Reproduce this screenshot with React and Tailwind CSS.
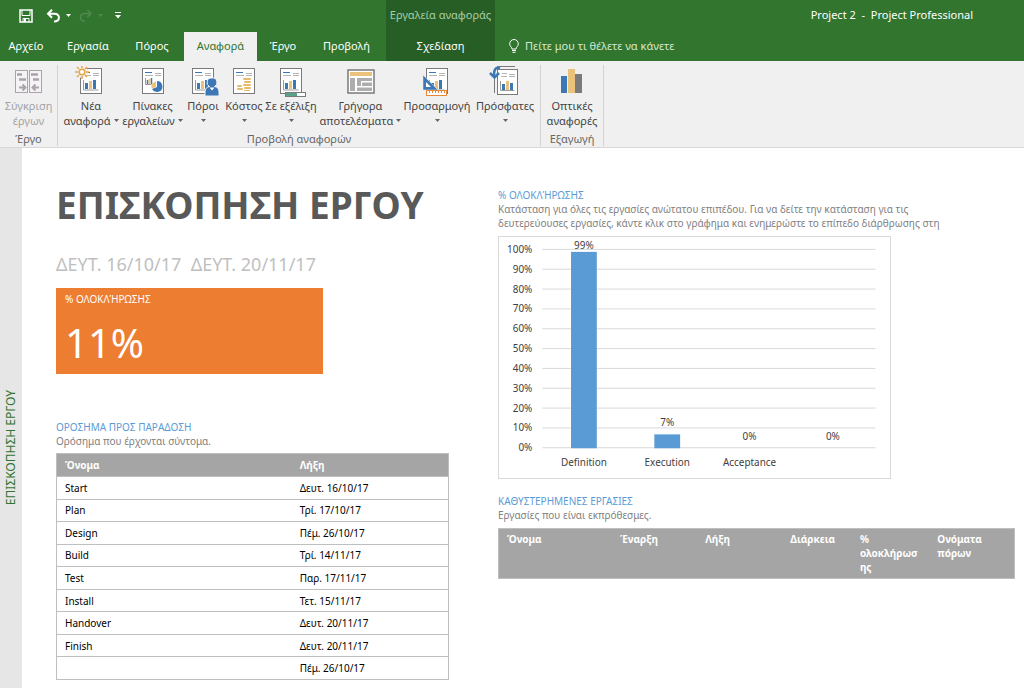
import React from "react";

const tabs = [
  { label: "Αρχείο", width: "w-[52px]" },
  { label: "Εργασία", width: "w-[72px]" },
  { label: "Πόρος", width: "w-[56px] mr-1" },
  { label: "Αναφορά", width: "w-[73px]", active: true },
  { label: "Έργο", width: "w-[52px]" },
  { label: "Προβολή", width: "w-[75px]" },
];

const milestones = [
  ["Start", "Δευτ. 16/10/17"],
  ["Plan", "Τρί. 17/10/17"],
  ["Design", "Πέμ. 26/10/17"],
  ["Build", "Τρί. 14/11/17"],
  ["Test", "Παρ. 17/11/17"],
  ["Install", "Τετ. 15/11/17"],
  ["Handover", "Δευτ. 20/11/17"],
  ["Finish", "Δευτ. 20/11/17"],
  ["", "Πέμ. 26/10/17"],
];

const chartData = [
  { name: "Definition", value: 99 },
  { name: "Execution", value: 7 },
  { name: "Acceptance", value: 0 },
  { name: "", value: 0 },
];

const lateColumns = [
  { label: "Όνομα", width: "w-[22%]" },
  { label: "Έναρξη", width: "w-[16.5%]" },
  { label: "Λήξη", width: "w-[16.5%]" },
  { label: "Διάρκεια", width: "w-[13.5%]" },
  { label: "% ολοκλήρωσης", width: "w-[15%]" },
  { label: "Ονόματα πόρων", width: "w-[16.5%]" },
];

function Caret({ className = "" }) {
  return (
    <svg width="5" height="3" viewBox="0 0 5 3" className={`inline-block ${className}`}>
      <path d="M0 0h5L2.5 3z" fill="currentColor" />
    </svg>
  );
}

// White sheet with the text lines on top, shared by most report icons
function Sheet({ children, bars = true }) {
  return (
    <svg width="34" height="32" viewBox="0 0 34 32">
      <rect x="6.5" y="2.5" width="21" height="25" fill="#fff" stroke="#7a7a7a" />
      <path d="M9 6.5h7" stroke="#3b78b5" />
      <path d="M9 9.5h8M19 7.5h6M19 9.5h6" stroke="#b5b5b5" />
      {bars && (
        <>
          <path d="M9.5 14v10h15" stroke="#9a9a9a" fill="none" />
          <rect x="11" y="17" width="3" height="6" fill="#3b78b5" />
          <rect x="15" y="15" width="3" height="8" fill="#eac27c" />
          <rect x="19" y="14" width="3" height="9" fill="#3b78b5" />
        </>
      )}
      {children}
    </svg>
  );
}

function CompareIcon() {
  return (
    <svg width="34" height="32" viewBox="0 0 34 32" fill="none" stroke="#aaa4aa">
      <rect x="3.5" y="4.5" width="12" height="22" fill="#f6f3f6" />
      <rect x="17.5" y="4.5" width="12" height="22" fill="#f6f3f6" />
      <path d="M5 8.5h5M7 13.5h7M19 8.5h7M21 13.5h6" strokeWidth="2.5" />
      <path d="M7 21.5h6M10.5 18.5l3 3-3 3M27 21.5h-6M23.5 18.5l-3 3 3 3" strokeWidth="2" />
    </svg>
  );
}

function NewIcon() {
  return (
    <Sheet>
      <circle cx="8" cy="6" r="6" fill="#f0f0f0" />
      <circle cx="8" cy="6" r="2.8" fill="#fff" stroke="#e3a748" strokeWidth="1.5" />
      <path
        d="M8 0v2M8 10v3M1 6h3M12 6h3M3 1l2 2M11 9l2 2M3 11l2-2M11 3l2-2"
        stroke="#e3a748"
        strokeWidth="1.5"
      />
    </Sheet>
  );
}

function DashboardIcon() {
  return (
    <Sheet bars={false}>
      <path d="M9.5 12v6.5h6" stroke="#9a9a9a" fill="none" />
      <path d="M11.5 18v-4M15.5 18v-6" stroke="#3b78b5" strokeWidth="1.5" />
      <path d="M13.5 18v-5" stroke="#eac27c" strokeWidth="2" />
      <path d="M20 21v-5.5a5.5 5.5 0 0 0-4.5 7z" fill="#eac27c" />
      <path d="M21 21v-6a5.5 5.5 0 1 1-5 8z" fill="#3b78b5" />
    </Sheet>
  );
}

function ResourcesIcon() {
  return (
    <Sheet>
      <path
        d="M26 12a4.5 4.5 0 0 1 2.5 8.5c3 .5 4.5 2.5 4.5 5.5v4H19v-4c0-3 1.5-5 4.5-5.5A4.5 4.5 0 0 1 26 12z"
        fill="#3b78b5"
        stroke="#f0f0f0"
      />
      <path d="M23.5 21.5l2.5 3 2.5-3z" fill="#fff" />
    </Sheet>
  );
}

function CostIcon() {
  return (
    <Sheet bars={false}>
      <g fill="#e8bb6c">
        <rect x="16" y="12" width="8" height="2" rx="1" />
        <rect x="17" y="15" width="7" height="2" rx="1" />
        <rect x="16" y="18" width="8" height="2" rx="1" />
        <rect x="17" y="21" width="7" height="2" rx="1" />
        <rect x="10" y="19" width="5" height="2" rx="1" />
        <rect x="10" y="22" width="6" height="2" rx="1" />
        <rect x="17" y="24" width="6" height="1" />
      </g>
    </Sheet>
  );
}

function ProgressIcon() {
  return (
    <Sheet>
      <rect x="11.5" y="26.5" width="20" height="4" fill="#fff" stroke="#7a7a7a" />
      <rect x="12" y="27" width="11" height="3" fill="#5aa287" />
    </Sheet>
  );
}

function GettingStartedIcon() {
  return (
    <svg width="34" height="32" viewBox="0 0 34 32">
      <rect x="4" y="4" width="26" height="23" fill="#fff" stroke="#7a7a7a" strokeWidth="1.5" />
      <rect x="6" y="6" width="22" height="4" fill="#eac27c" />
      <path d="M6 12h5v13H6zM13 12h15v3H17v5h-4zM18 16.5h10V20H18zM13 21.5h15V25H13z" fill="#adadad" />
    </svg>
  );
}

function CustomIcon() {
  return (
    <Sheet>
      <path d="M3 9v15h15z" fill="#3b78b5" stroke="#f0f0f0" strokeWidth=".5" />
      <path d="M6 16v5h5z" fill="#fff" />
      <rect x="6.5" y="24.5" width="20" height="5" fill="#fff" stroke="#e8883a" />
      <path d="M9.5 25v2M12.5 25v2M15.5 25v2M18.5 25v2M21.5 25v2M24.5 25v2" stroke="#e8883a" />
    </Sheet>
  );
}

function RecentIcon() {
  return (
    <svg width="34" height="32" viewBox="0 0 34 32" fill="none">
      <path d="M6.5 9v18M9 .5h18" stroke="#7a7a7a" />
      <rect x="9.5" y="3.5" width="20" height="25" fill="#fff" stroke="#7a7a7a" />
      <path d="M14 7.5h5M13 10.5h6M21 8.5h6M21 10.5h6" stroke="#b5b5b5" />
      <path d="M12.5 15v9.5h14" stroke="#9a9a9a" />
      <rect x="14" y="18" width="3" height="6" fill="#3b78b5" />
      <rect x="18" y="15" width="3" height="9" fill="#eac27c" />
      <rect x="22" y="17" width="3" height="7" fill="#3b78b5" />
      <path d="M12 2C7 1 6 4 6 9" stroke="#3b78b5" strokeWidth="2.5" />
      <path d="M2 7l4.5 4.5L11 7" stroke="#3b78b5" strokeWidth="2.5" />
    </svg>
  );
}

function VisualIcon() {
  return (
    <svg width="34" height="32" viewBox="0 0 34 32">
      <rect x="6" y="10" width="6" height="17" fill="#3b78b5" />
      <rect x="13" y="3" width="7" height="24" fill="#eac27c" />
      <rect x="20" y="8" width="7" height="19" fill="#7a7a7a" />
    </svg>
  );
}

const viewButtons = [
  { lines: ["Νέα", "αναφορά"], icon: NewIcon, width: "w-[64px]", caret: true },
  { lines: ["Πίνακες", "εργαλείων"], icon: DashboardIcon, width: "w-[59px]", caret: true },
  { lines: ["Πόροι", ""], icon: ResourcesIcon, width: "w-[42px]", caret: true },
  { lines: ["Κόστος", ""], icon: CostIcon, width: "w-[40px]", caret: true },
  { lines: ["Σε εξέλιξη", ""], icon: ProgressIcon, width: "w-[54px]", caret: true },
  { lines: ["Γρήγορα", "αποτελέσματα"], icon: GettingStartedIcon, width: "w-[85px]", caret: true },
  { lines: ["Προσαρμογή", ""], icon: CustomIcon, width: "w-[68px]", caret: true },
  { lines: ["Πρόσφατες", ""], icon: RecentIcon, width: "w-[68px]", caret: true },
];

function RibbonButton({ item, disabled }) {
  const Icon = item.icon;
  return (
    <button
      disabled={disabled}
      className={`flex shrink-0 flex-col items-center whitespace-nowrap text-[11px] leading-[15px] ${item.width} ${disabled ? "text-[#a3a3a3]" : "text-[#444]"}`}
    >
      <Icon />
      <span>{item.lines[0]}</span>
      <span className="flex h-[15px] items-center gap-[3px]">
        {item.lines[1]}
        {item.caret && <Caret className="text-[#666]" />}
      </span>
    </button>
  );
}

function RibbonGroup({ label, children }) {
  return (
    <section className="flex flex-col border-r border-[#d2d2d2] px-px">
      <div className="flex flex-1 justify-center pt-px">{children}</div>
      <h2 className="text-center text-[11px] leading-[15px] text-[#666]">{label}</h2>
    </section>
  );
}

function Header() {
  return (
    <header className="flex h-[61px] bg-[#31752f] text-[11px] text-white">
      <div className="flex shrink-0 flex-col">
        <div className="flex h-[31px] items-center pl-[19px]">
          <button aria-label="Αποθήκευση">
            <svg width="14" height="14" viewBox="0 0 14 14" fill="none" stroke="#fff" strokeWidth="1.5">
              <path d="M1 1h12v12H1z" />
              <path d="M3 1v5.5h8V1M4 13V9.5h6V13" strokeWidth="1" />
              <path d="M6 10v3" strokeWidth="2" />
            </svg>
          </button>
          <button aria-label="Αναίρεση" className="ml-[13px] flex items-center gap-[5px]">
            <svg width="15" height="14" viewBox="0 0 15 14" fill="none" stroke="#fff" strokeWidth="2">
              <path d="M6 .8L2 4.8l4 4M2 4.8h6.500c6 0 6 7.700-.5 7.700" />
            </svg>
            <Caret />
          </button>
          <button aria-label="Επανάληψη" disabled className="ml-2 flex items-center gap-[5px] text-[#50894f]">
            <svg width="14" height="14" viewBox="0 0 14 14" fill="none" stroke="currentColor" strokeWidth="1.5">
              <path d="M8.5 1L12 4.500 8.500 8M12 4.500H6c-6 0-6 7.500 0 8" />
            </svg>
            <Caret />
          </button>
          <button aria-label="Προσαρμογή γραμμής" className="ml-3">
            <svg width="6" height="7" viewBox="0 0 6 7" fill="#fff">
              <path d="M0 0h6v1H0zM0 3h6L3 6.500z" />
            </svg>
          </button>
        </div>
        <nav className="flex h-[30px] pt-px pr-0.5">
          {tabs.map((tab) => (
            <button
              key={tab.label}
              className={`${tab.width} ${tab.active ? "bg-[#f0f0f0] text-[#31752f]" : ""}`}
            >
              {tab.label}
            </button>
          ))}
        </nav>
      </div>
      <div className="flex w-[109px] shrink-0 flex-col bg-[#265e26]">
        <span className="flex h-[31px] items-center justify-center whitespace-nowrap text-[#a9cda7]">Εργαλεία αναφοράς</span>
        <button className="h-[30px]">Σχεδίαση</button>
      </div>
      <div className="flex flex-1 flex-col">
        <h1 className="flex h-[31px] items-center justify-end whitespace-pre pr-[51px]">Project 2  -  Project Professional</h1>
        <button className="flex h-[30px] items-center gap-1.5 pl-[14px] text-[#d5e8d4]">
          <svg width="10" height="14" viewBox="0 0 10 14" fill="none" stroke="#fff">
            <path d="M3 10C3 8 .7 7.5.7 4.8a4.3 4.3 0 0 1 8.6 0C9.3 7.5 7 8 7 10zM3 11.5h4M3.5 13.3h3" />
          </svg>
          Πείτε μου τι θέλετε να κάνετε
        </button>
      </div>
    </header>
  );
}

function CompletionChart() {
  const ticks = [100, 90, 80, 70, 60, 50, 40, 30, 20, 10, 0];
  const y = (v) => Math.round(213 - v * 2);
  const x = (i) => Math.round(85 + i * 83.7);
  return (
    <svg width="393" height="243" viewBox="0 0 393 243" className="border border-[#d9d9d9] text-[10px]" fill="#404040">
      {ticks.map((t) => (
        <g key={t}>
          <path d={`M43 ${y(t) - 0.5}H379`} stroke="#d9d9d9" />
          <text x="33" y={y(t) + 3} textAnchor="end">{t}%</text>
        </g>
      ))}
      {chartData.map((d, i) => (
        <g key={i}>
          <rect x={x(i) - 13} y={y(d.value)} width="26" height={213 - y(d.value)} fill="#5b9bd5" />
          <text x={x(i)} y={y(d.value) - (d.value > 50 ? 3 : 8)} textAnchor="middle">{d.value}%</text>
          <text x={x(i)} y="231" textAnchor="middle">{d.name}</text>
        </g>
      ))}
    </svg>
  );
}

function SectionTitle({ title, text }) {
  return (
    <div className="text-[10px] leading-[14px]">
      <h3 className="text-[#5b9bd5]">{title}</h3>
      <p className="text-[#7f7f7f]">{text}</p>
    </div>
  );
}

function App() {
  return (
    <div className="flex min-h-screen flex-col bg-white font-['Noto_Sans','Open_Sans',sans-serif]">
      <Header />
      <div className="flex h-[87px] border-b border-[#d8d8d8] bg-[#f0f0f0] pt-1 pb-[1px]">
        <RibbonGroup label="Έργο">
          <RibbonButton
            disabled
            item={{ lines: ["Σύγκριση", "έργων"], icon: CompareIcon, width: "w-[55px]" }}
          />
        </RibbonGroup>
        <RibbonGroup label="Προβολή αναφορών">
          {viewButtons.map((item) => (
            <RibbonButton key={item.lines[0]} item={item} />
          ))}
        </RibbonGroup>
        <RibbonGroup label="Εξαγωγή">
          <RibbonButton item={{ lines: ["Οπτικές", "αναφορές"], icon: VisualIcon, width: "w-[60px]" }} />
        </RibbonGroup>
      </div>
      <div className="flex flex-1">
        <aside className="flex w-[22px] shrink-0 items-center justify-center bg-[#e6e6e6] pt-[60px]">
          <span className="rotate-180 whitespace-nowrap text-[12px] text-[#31752f] [writing-mode:vertical-rl]">
            ΕΠΙΣΚΟΠΗΣΗ ΕΡΓΟΥ
          </span>
        </aside>
        <main className="flex flex-1 gap-[49px] pr-[9px] pl-[34px]">
          <div className="w-[393px] shrink-0 pt-8">
            <h2 className="text-[37px] leading-[50px] font-bold whitespace-nowrap text-[#595959]">ΕΠΙΣΚΟΠΗΣΗ ΕΡΓΟΥ</h2>
            <p className="mt-6 text-[18px] leading-[20px] whitespace-pre text-[#bfbfbf]">ΔΕΥΤ. 16/10/17  ΔΕΥΤ. 20/11/17</p>
            <div className="mt-[14px] h-[86px] w-[267px] bg-[#ed7d31] px-[9px] pt-1 text-white">
              <h3 className="text-[10px] leading-[14px]">% ΟΛΟΚΛΉΡΩΣΗΣ</h3>
              <p className="mt-3 text-[40px] leading-[50px]">11%</p>
            </div>
            <div className="mt-[46px]">
              <SectionTitle title="ΟΡΟΣΗΜΑ ΠΡΟΣ ΠΑΡΑΔΟΣΗ" text="Ορόσημα που έρχονται σύντομα." />
            </div>
            <table className="mt-[5px] h-[227px] w-full table-fixed border-collapse border border-[#bfbfbf] text-left text-[10px] leading-[14px]">
              <thead>
                <tr className="h-[23px] bg-[#a5a5a5] text-white">
                  <th className="w-[60%] px-2">Όνομα</th>
                  <th className="px-2">Λήξη</th>
                </tr>
              </thead>
              <tbody>
                {milestones.map(([name, finish], index) => (
                  <tr key={index} className="border-t border-[#bfbfbf]">
                    <td className="px-2">{name}</td>
                    <td className="px-2">{finish}</td>
                  </tr>
                ))}
              </tbody>
            </table>
          </div>
          <div className="min-w-0 flex-1 pt-10">
            <div className="max-w-[450px]">
              <SectionTitle
                title="% ΟΛΟΚΛΉΡΩΣΗΣ"
                text="Κατάσταση για όλες τις εργασίες ανώτατου επιπέδου. Για να δείτε την κατάσταση για τις δευτερεύουσες εργασίες, κάντε κλικ στο γράφημα και ενημερώστε το επίπεδο διάρθρωσης στη"
              />
            </div>
            <div className="mt-[6px]">
              <CompletionChart />
            </div>
            <div className="mt-[15px]">
              <SectionTitle title="ΚΑΘΥΣΤΕΡΗΜΕΝΕΣ ΕΡΓΑΣΙΕΣ" text="Εργασίες που είναι εκπρόθεσμες." />
            </div>
            <table className="mt-[6px] w-full table-fixed border-collapse border border-[#bfbfbf] text-left text-[10px] leading-[14px]">
              <thead>
                <tr className="bg-[#a5a5a5] align-top text-white">
                  {lateColumns.map((col) => (
                    <th key={col.label} className={`pt-[3px] pr-2 pb-1 pl-2 break-words ${col.width}`}>{col.label}</th>
                  ))}
                </tr>
              </thead>
            </table>
          </div>
        </main>
      </div>
    </div>
  );
}

export default App;
